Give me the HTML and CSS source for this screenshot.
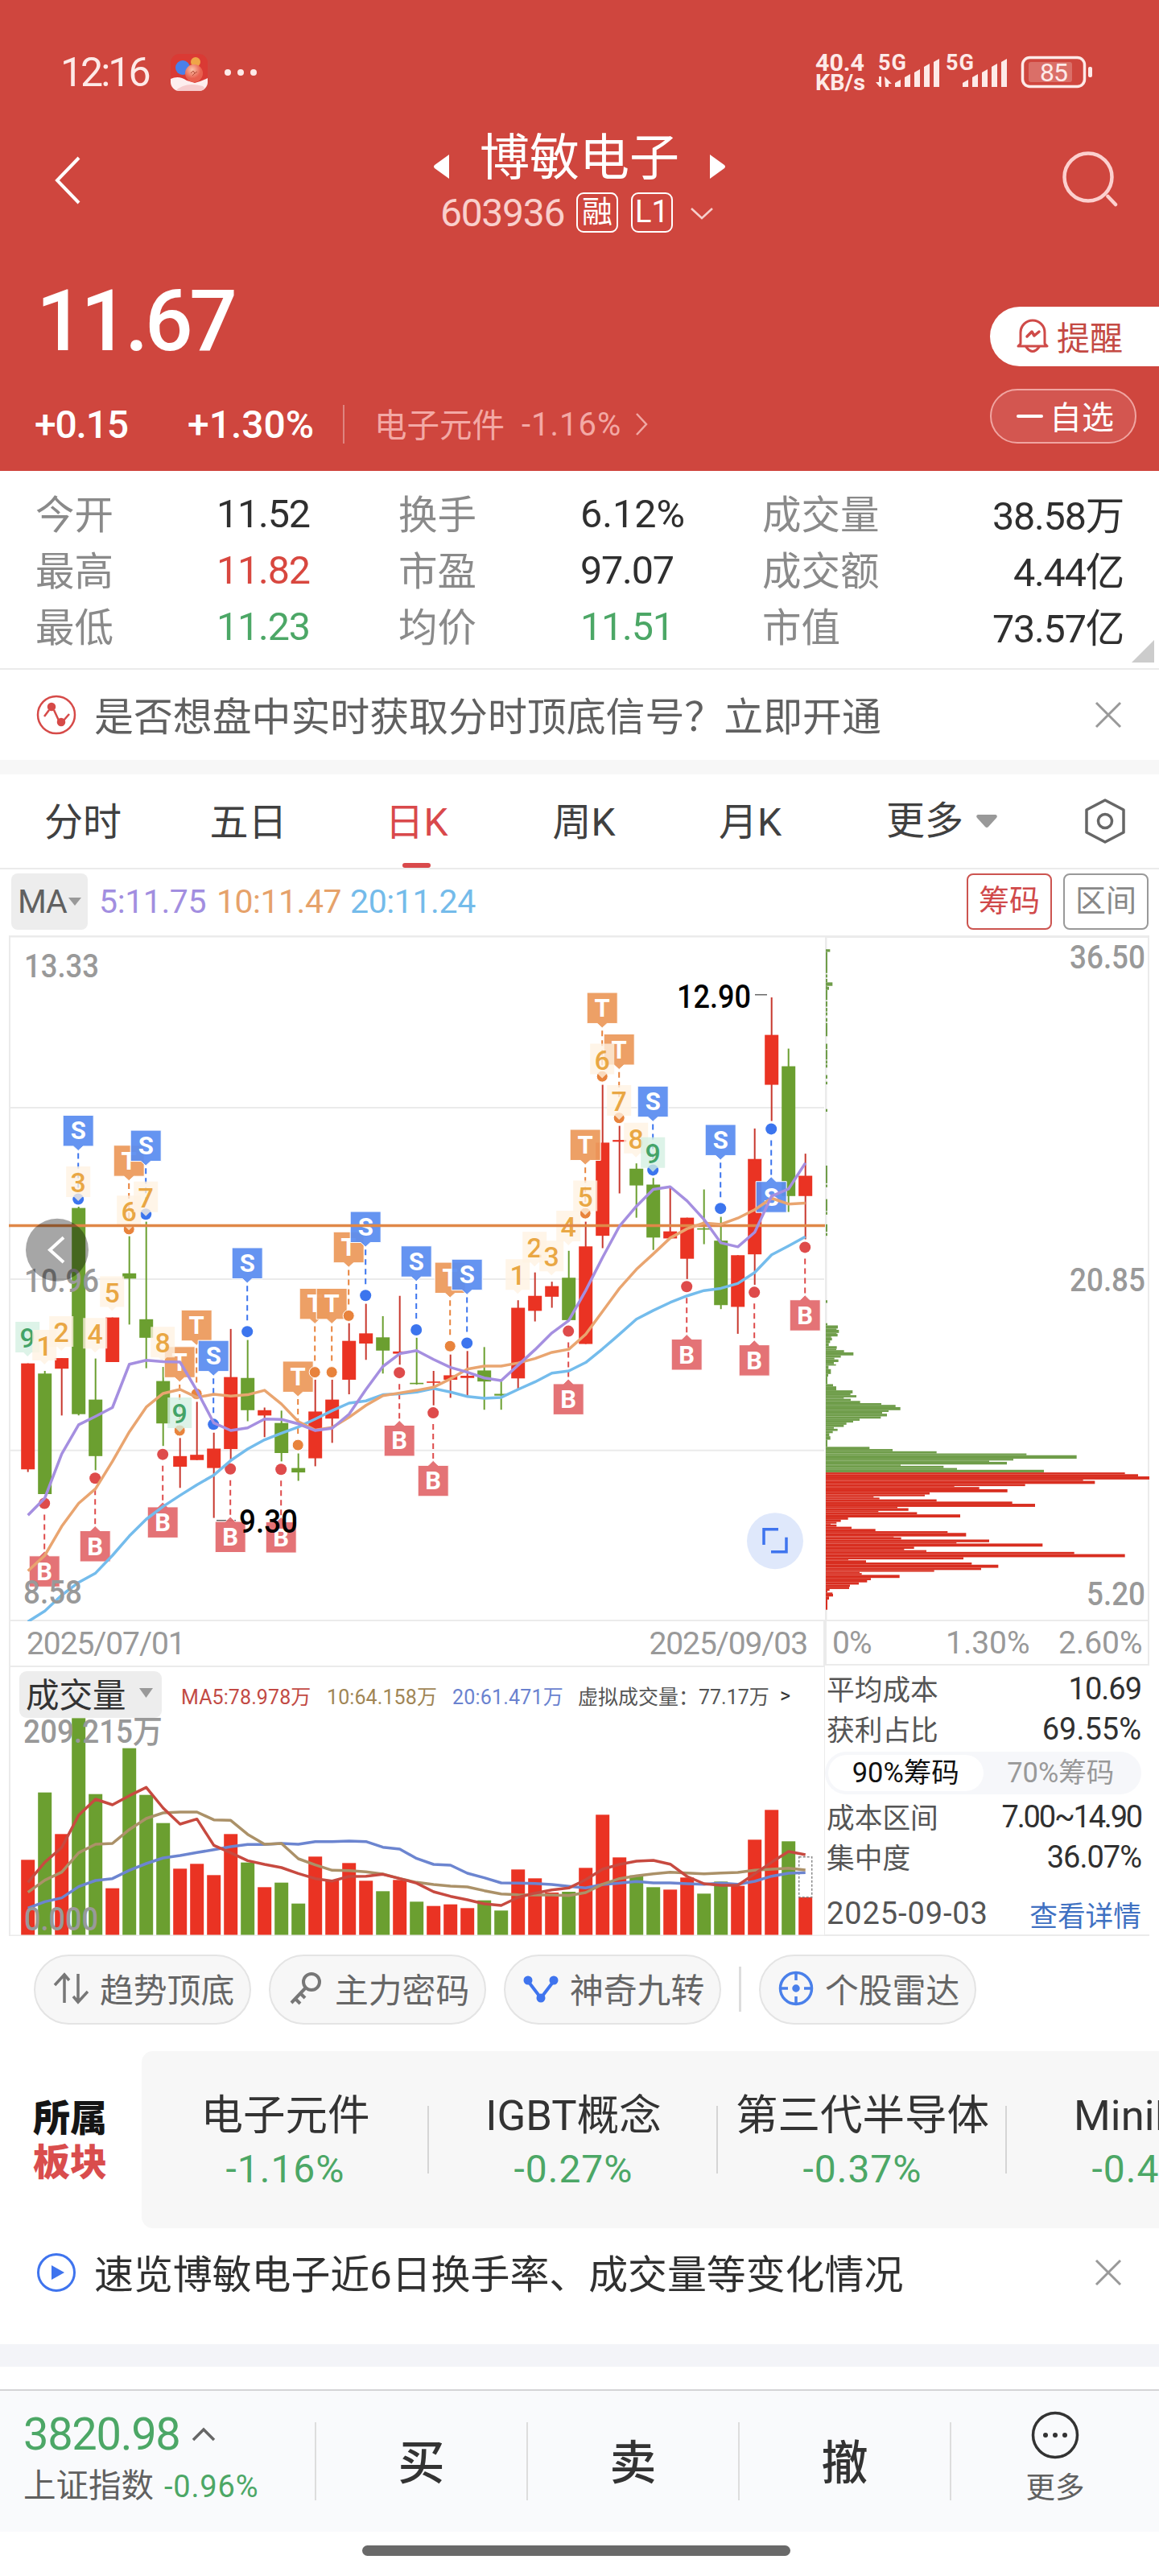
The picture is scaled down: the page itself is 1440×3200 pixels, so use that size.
FILE: index.html
```html
<!DOCTYPE html>
<html lang="zh-CN">
<head>
    <meta charset="UTF-8">
    <meta name="viewport" content="width=device-width, initial-scale=1.0">
    <title>博敏电子 603936</title>
    <link rel="stylesheet" href="styles.css">
</head>
<body>
    <!-- Header -->
    <header class="header">
        <div class="status-bar">
            <span class="clock">12:16</span>
            <svg class="app-icon" width="46" height="46" viewBox="0 0 46 46">
                <defs>
                    <radialGradient id="ball" cx=".4" cy=".3"><stop offset="0" stop-color="#fbc3a8"/><stop offset="1" stop-color="#e8604f"/></radialGradient>
                    <clipPath id="appClip"><rect width="46" height="46" rx="11"/></clipPath>
                </defs>
                <g clip-path="url(#appClip)">
                    <rect width="46" height="46" fill="#da3a34"/>
                    <path d="M0 31 Q10 26 20 33 L30 36 Q38 34 46 30 V46 H0Z" fill="#fdeeee"/>
                    <path d="M6 46 Q18 34 40 40 L46 46Z" fill="#f6cccd"/>
                    <circle cx="31" cy="10" r="6" fill="#efa548"/>
                    <circle cx="15" cy="17" r="9" fill="#4a80ea"/>
                    <circle cx="29" cy="24" r="11" fill="url(#ball)"/>
                    <path d="M25 24l3-3 2 3 3-2M27 27l4-4" stroke="#b5513c" fill="none"/>
                </g>
            </svg>
            <span class="dots"><i></i><i></i><i></i></span>
            <svg class="signal" width="350" height="60" viewBox="0 0 350 60">
                <g fill="#fdeae8">
                    <text x="2" y="28" class="st-bold" font-size="30" textLength="61" lengthAdjust="spacingAndGlyphs">40.4</text>
                    <text x="2" y="52" class="st-bold" font-size="28" textLength="62" lengthAdjust="spacingAndGlyphs">KB/s</text>
                    <text x="80" y="27" class="st-bold" font-size="27" textLength="35">5G</text>
                    <text x="164" y="27" class="st-bold" font-size="27" textLength="35">5G</text>
                    <path d="M77 42h4V35h3V48h-2zM88 35l9 9h-4v4h-4z"/>
                    <path d="M101 48v-5l7-4v9zM113 48V36l7-4v16zM125 48V30l7-4v22zM137 48V23l7-4v29zM149 48V17l7-4v35z"/>
                    <path d="M185 48v-5l7-4v9zM197 48V36l7-4v16zM209 48V30l7-4v22zM221 48V23l7-4v29zM233 48V17l7-4v35z"/>
                    <rect x="341" y="23" width="5" height="13" rx="2"/>
                    <rect x="267" y="17" width="54" height="25" rx="3" opacity=".25"/>
                    <text x="281" y="41" font-size="32" textLength="35">85</text>
                </g>
                <rect x="259.500" y="11.500" width="77" height="36" rx="9" fill="none" stroke="#fdeae8" stroke-width="3.500"/>
            </svg>
        </div>

        <div class="nav">
            <svg class="nav-back" width="34" height="60" viewBox="0 0 34 60"><path d="M31 2L4 30L31 58" fill="none" stroke="#fff" stroke-width="4"/></svg>
            <div class="nav-center">
                <div class="name-row">
                    <svg width="20" height="30" viewBox="0 0 20 30"><path d="M20 0V30L2 17Q0 15 2 13Z" fill="#fff"/></svg>
                    <h1>博敏电子</h1>
                    <svg width="20" height="30" viewBox="0 0 20 30"><path d="M0 0V30L18 17Q20 15 18 13Z" fill="#fff"/></svg>
                </div>
                <div class="code-row">
                    <span class="code">603936</span>
                    <span class="badge">融</span>
                    <span class="badge">L1</span>
                    <svg width="30" height="16" viewBox="0 0 30 16"><path d="M2 2L15 14L28 2" fill="none" stroke="#f6cfcc" stroke-width="2.500"/></svg>
                </div>
            </div>
            <svg class="nav-search" width="72" height="72" viewBox="0 0 72 72" fill="none" stroke="#fcd0ce" stroke-width="4.500" stroke-linecap="round"><circle cx="34" cy="34" r="29.500"/><path d="M58.500 58L68 68"/></svg>
        </div>

        <div class="price">11.67</div>
        <div class="change-row">
            <span class="chg">+0.15</span>
            <span class="chg pct">+1.30%</span>
            <span class="vline"></span>
            <span class="sector-name">电子元件</span>
            <span class="sector-pct">-1.16%</span>
            <svg width="17" height="30" viewBox="0 0 17 30"><path d="M2 2L14 15L2 28" fill="none" stroke="#f0a8a4" stroke-width="2.500"/></svg>
        </div>

        <div class="head-actions">
            <div class="remind">
                <svg width="40" height="42" viewBox="0 0 40 42" fill="none" stroke="#cf4a48" stroke-width="3" stroke-linejoin="round" stroke-linecap="round"><path d="M5 31V17A15 15 0 0 1 35 17V31L38 34H2Z"/><path d="M12 35Q20 46 28 35"/><path d="M13 22l6-6 3 5 6-5" stroke-width="3.500"/></svg>
                提醒
            </div>
            <div class="fav"><i></i>自选</div>
        </div>
    </header>

    <!-- Quote numbers -->
    <section class="quote">
        <span class="lb">今开</span><b>11.52</b><span class="lb">换手</span><b class="wide">6.12%</b><span class="lb">成交量</span><b class="right">38.58万</b>
        <span class="lb">最高</span><b class="up">11.82</b><span class="lb">市盈</span><b>97.07</b><span class="lb">成交额</span><b class="right">4.44亿</b>
        <span class="lb">最低</span><b class="down">11.23</b><span class="lb">均价</span><b class="down">11.51</b><span class="lb">市值</span><b class="right">73.57亿</b>
        <svg class="corner" width="28" height="28" viewBox="0 0 28 28"><path d="M28 0V28H0Z" fill="#ccc"/></svg>
    </section>

    <section class="notice">
        <svg width="50" height="50" viewBox="0 0 50 50" fill="none" stroke="#d64a48" stroke-width="2.500"><circle cx="25" cy="25" r="23"/><path d="M10 27L16 19M22 19L28 32M34 32L41 24"/><circle cx="19" cy="15" r="4" fill="#d64a48"/><circle cx="31" cy="34" r="4" fill="#d64a48"/></svg>
        <span>是否想盘中实时获取分时顶底信号？立即开通</span>
        <svg class="close" width="34" height="34" viewBox="0 0 34 34"><path d="M2 2L32 32M32 2L2 32" stroke="#999" stroke-width="3"/></svg>
    </section>

    <!-- Period tabs -->
    <nav class="tabs">
        <span>分时</span>
        <span>五日</span>
        <span class="active">日K</span>
        <span>周K</span>
        <span>月K</span>
        <span class="more">更多 <svg width="26" height="17" viewBox="0 0 26 17"><path d="M2 0H24Q27 1 25 4L15 15Q13 17 11 15L1 4Q-1 1 2 0Z" fill="#999"/></svg></span>
        <svg width="54" height="56" viewBox="0 0 54 56" fill="none" stroke="#666" stroke-width="3.500" stroke-linejoin="round"><path d="M27 2L50 14V42L27 54L4 42V14Z"/><circle cx="27" cy="28" r="8.500"/></svg>
    </nav>

    <div class="ma-row">
        <span class="ma-btn">MA<svg width="16" height="10" viewBox="0 0 16 10"><path d="M0 0H16L8 10Z" fill="#999"/></svg></span>
        <span class="ma5">5:11.75</span>
        <span class="ma10">10:11.47</span>
        <span class="ma20">20:11.24</span>
        <span class="box on">筹码</span>
        <span class="box">区间</span>
    </div>

    <!-- Charts -->
    <section class="charts">
        <div class="left">
            <svg id="kline" width="1025" height="852" viewBox="0 0 1025 852"></svg>
            <div class="dates"><span>2025/07/01</span><span>2025/09/03</span></div>
            <div class="volume">
                <svg id="vol" width="1025" height="336" viewBox="0 0 1025 336"></svg>
                <div class="vol-head">
                    <span class="vol-btn">成交量<svg width="17" height="12" viewBox="0 0 17 12"><path d="M0 0H17L8.500 12Z" fill="#999"/></svg></span>
                    <span class="v5">MA5:78.978万</span>
                    <span class="v10">10:64.158万</span>
                    <span class="v20">20:61.471万</span>
                    <span class="vv">虚拟成交量：77.17万</span>
                    <span class="va">&gt;</span>
                </div>
            </div>
        </div>
        <div class="chips">
            <svg id="chips" width="403" height="852" viewBox="1025 0 403 852"></svg>
            <div class="axis"><span>0%</span><span>1.30%</span><span>2.60%</span></div>
            <div class="cost">
                <p><span>平均成本</span><b>10.69</b></p>
                <p><span>获利占比</span><b class="wide">69.55%</b></p>
                <div class="toggle"><span class="sel">90%筹码</span><span>70%筹码</span></div>
                <p><span>成本区间</span><b class="tight">7.00~14.90</b></p>
                <p><span>集中度</span><b>36.07%</b></p>
                <p class="foot"><span>2025-09-03</span><a>查看详情</a></p>
            </div>
        </div>
    </section>

    <!-- Tool chips -->
    <div class="tools">
        <span class="tool"><svg width="44" height="44" viewBox="0 0 44 44" fill="none" stroke="#777" stroke-width="3.500"><path d="M14 40V5M2 18L14 5L20 12M31 4V39M43 26L31 39L25 32"/></svg>趋势顶底</span>
        <span class="tool"><svg width="44" height="44" viewBox="0 0 44 44" fill="none" stroke="#777" stroke-width="4"><circle cx="29" cy="14" r="10"/><path d="M22 21L4 40M9 35L15 41M15 28L21 34"/></svg>主力密码</span>
        <span class="tool"><svg width="44" height="44" viewBox="0 0 44 44" fill="#3f74ee" stroke="#3f74ee" stroke-width="4"><path d="M6 13L22 34L38 13" fill="none"/><circle cx="6" cy="12" r="3.500"/><circle cx="22" cy="34" r="3.500"/><circle cx="38" cy="12" r="3.500"/></svg>神奇九转</span>
        <i class="tool-line"></i>
        <span class="tool"><svg width="44" height="44" viewBox="0 0 44 44" fill="none" stroke="#4a80ea" stroke-width="3.500"><circle cx="22" cy="22" r="19.500"/><path d="M22 2V12M22 32V42M2 22H12M32 22H42"/><circle cx="22" cy="22" r="3" fill="#4a80ea"/></svg>个股雷达</span>
    </div>

    <section class="sectors">
        <div class="sec-title">所属<br><em>板块</em></div>
        <div class="sec-list">
            <div class="sec"><span>电子元件</span><b>-1.16%</b></div>
            <div class="sec"><span>IGBT概念</span><b>-0.27%</b></div>
            <div class="sec"><span>第三代半导体</span><b>-0.37%</b></div>
            <div class="sec"><span>MiniLED</span><b>-0.43%</b></div>
        </div>
    </section>

    <section class="notice video">
        <svg width="50" height="50" viewBox="0 0 50 50"><circle cx="25" cy="25" r="22.500" fill="none" stroke="#3f74ee" stroke-width="3"/><path d="M19 16L35 25L19 34Z" fill="#3f74ee"/></svg>
        <span>速览博敏电子近6日换手率、成交量等变化情况</span>
        <svg class="close" width="34" height="34" viewBox="0 0 34 34"><path d="M2 2L32 32M32 2L2 32" stroke="#999" stroke-width="3"/></svg>
    </section>

    <!-- Bottom bar -->
    <footer class="bottom">
        <div class="index">
            <div class="idx-num">3820.98<svg width="30" height="18" viewBox="0 0 30 18"><path d="M2 16L15 3L28 16" fill="none" stroke="#666" stroke-width="3.500"/></svg></div>
            <div class="idx-name">上证指数 <b>-0.96%</b></div>
        </div>
        <div class="act">买</div>
        <div class="act">卖</div>
        <div class="act">撤</div>
        <div class="act last">
            <svg width="60" height="60" viewBox="0 0 60 60" fill="#333"><circle cx="30" cy="30" r="27.500" fill="none" stroke="#333" stroke-width="3.500"/><circle cx="18" cy="30" r="3"/><circle cx="30" cy="30" r="3"/><circle cx="42" cy="30" r="3"/></svg>
            更多
        </div>
    </footer>
    <div class="home-bar"></div>

    <script>
        const RED = "#ea3323", GREEN = "#6b9f30";
        const X = i => 34.7 + 21 * i;
        const Y = v => v / 1.8233 - 2;      // price panel units to px
        const V = v => v / 3 - 69;          // volume panel units to px

        const line = (x1, y1, x2, y2, c, w = 2, extra = "") =>
            `<line x1="${x1}" y1="${y1}" x2="${x2}" y2="${y2}" stroke="${c}" stroke-width="${w}" ${extra}/>`;
        const rect = (x, y, w, h, c, extra = "") =>
            `<rect x="${x}" y="${y}" width="${w}" height="${h}" fill="${c}" ${extra}/>`;
        const label = (s, x, y, len, size, c, extra = "") =>
            `<text x="${x}" y="${y}" textLength="${len}" lengthAdjust="spacingAndGlyphs" font-size="${size}" fill="${c}" ${extra}>${s}</text>`;
        const curve = (arr, fy, c, w) =>
            `<polyline points="${arr.map((v, i) => X(i) + "," + fy(v)).join(" ")}" fill="none" stroke="${c}" stroke-width="${w}" stroke-linejoin="round"/>`;

        // [up?, body top, body bottom, high, low]
        const candles = [
            [1,973,1213,973,1219],[0,996,1269,990,1269],[1,961,985,961,1091],[0,621,1088,618,1091],[0,1055,1183,962,1215],
            [1,869,970,869,970],[0,769,781,685,885],[0,873,915,652,984],[0,1013,1109,981,1160],[1,1183,1207,1142,1255],
            [1,1180,1192,1060,1192],[1,1166,1210,1130,1323],[1,1004,1167,895,1195],[0,1006,1079,920,1104],[1,1079,1091,1073,1140],
            [0,1108,1176,1080,1195],[0,1210,1220,1177,1239],[1,1082,1188,1010,1206],[1,1055,1098,1010,1153],[1,922,1010,882,1043],
            [1,905,928,838,965],[0,914,944,866,996],[1,946,951,820,976],[0,1017,1020,915,1021],[1,1014,1017,990,1068],
            [1,1000,1010,953,1051],[1,1001,1006,945,1047],[0,989,1014,936,1078],[0,1042,1046,1013,1078],[1,847,1007,830,1030],
            [1,820,854,767,878],[1,798,822,788,847],[0,779,875,718,875],[1,708,929,652,929],[1,473,684,342,712],
            [1,467,471,435,588],[0,532,570,520,643],[0,568,688,553,716],[1,674,690,575,690],[1,643,736,643,782],
            [0,667,670,579,703],[0,695,841,641,850],[1,728,845,728,906],[1,510,726,441,795],[1,229,342,144,424],
            [0,300,594,260,630],[1,548,594,498,692]
        ];
        const ma5 = [1317,1278,1178,1112,1093,1073,975,966,969,970,1035,1108,1125,1119,1099,1100,1110,1125,1120,1088,1032,980,951,944,964,982,993,1006,1012,977,942,904,876,808,733,662,617,579,573,605,647,700,709,676,594,578,519];
        const ma10 = [1443,1408,1342,1290,1257,1195,1128,1072,1041,1032,1050,1043,1047,1044,1034,1065,1105,1124,1118,1095,1068,1046,1040,1034,1027,1008,986,979,979,972,962,948,941,907,855,803,760,725,689,668,655,658,644,625,599,612,610];
        const ma20 = [1558,1534,1498,1469,1448,1408,1364,1326,1297,1272,1248,1226,1193,1167,1146,1131,1117,1099,1080,1063,1058,1044,1042,1038,1030,1038,1048,1052,1050,1032,1015,995,990,971,940,907,873,853,835,820,808,803,792,767,727,707,686];

        // signal tags: [letter, candle, dot position, tag below?]
        const tags = [
            ["S",3,601],["T",6,669],["S",7,635],["T",10,1042],["T",9,1125],["S",11,1111],["S",13,901],["T",16,1158],
            ["T",17,993],["T",18,993],["T",19,865],["S",20,819],["S",23,897],["T",25,934],["S",26,927],["T",33,633],
            ["T",34,323],["T",35,417],["S",37,535],["S",41,622],["S",44,442,1],
            ["B",1,1290,1],["B",4,1233,1],["B",8,1179,1],["B",12,1212,1],["B",15,1213,1],["B",22,994,1],["B",24,1085,1],
            ["B",32,900,1],["B",39,799,1],["B",43,812,1],["B",46,710,1]
        ];
        const tagColors = { S: ["#5b8df0", "#3c75ee"], T: ["#ec9a5c", "#e8833c"], B: ["#e26a6d", "#de4b4b"] };

        // nine-turn counters
        const counts = [
            [0,9,879],[1,1,897],[2,2,866],[3,3,527],[4,4,870],[5,5,776],[6,6,593],[7,7,561],[8,8,890],[9,9,1050],
            [29,1,737],[30,2,675],[31,3,695],[32,4,627],[33,5,559],[34,6,249],[35,7,343],[36,8,428],[37,9,461]
        ];

        function drawKline() {
            let s = "";
            [394, 782, 1170].forEach(v => s += line(12, Y(v), 1024, Y(v), "#ebebeb"));
            s += line(12, 1, 1025, 1, "#ebebeb", 3) + line(12, 851, 1025, 851, "#ebebeb") + line(12, 0, 12, 852, "#ebebeb");
            candles.forEach(([up, t, b, h, l], i) => {
                const c = up ? RED : GREEN;
                s += line(X(i), Y(h), X(i), Y(l), up ? "#c8382e" : GREEN);
                s += rect(X(i) - 8.5, Y(t), 17, Math.max(1.5, (b - t) / 1.8233), c);
            });
            s += label("12.90", 841, Y(168), 92, 40, "#000", 'class="mid"') + line(938, Y(138), 953, Y(138), "#666", 1.5);
            s += line(269, Y(1329), 293, Y(1329), "#444", 1.5);
            tags.forEach(([t, i, d, below]) => {
                const [bg, dot] = tagColors[t], x = X(i) - .5, y = Y(d), dir = below ? 1 : -1;
                s += line(x, y + 14 * dir, x, y + 59 * dir, dot, 2, 'stroke-dasharray="7 5"');
                s += `<circle cx="${x}" cy="${y}" r="7" fill="${dot}" stroke="#fff" stroke-width="${t === "T" ? 1 : 0}"/>`;
                const top = below ? y + 65.3 : y - 104.2;
                const tip = below ? `M${x - 19} ${top}H${x - 6}L${x} ${top - 6}L${x + 6} ${top}H${x + 19}V${top + 38.5}H${x - 19}Z`
                                  : `M${x - 19} ${top}H${x + 19}V${top + 38.5}H${x + 6}L${x} ${top + 44}L${x - 6} ${top + 38.5}H${x - 19}Z`;
                s += `<path d="${tip}" fill="${bg}" fill-opacity=".94" stroke="#fff" stroke-width="1"/>`;
                s += `<text x="${x}" y="${top + 30}" class="tag">${t}</text>`;
            });
            counts.forEach(([i, n, v]) => {
                const x = X(i) - .5, y = Y(v), g = n === 9;
                s += `<path d="M${x - 15} ${y}H${x + 15}V${y + 38}H${x + 5}L${x} ${y + 43}L${x - 5} ${y + 38}H${x - 15}Z" fill="${g ? "#d3efe1" : "#fff2e2"}" fill-opacity=".78"/>`;
                s += `<text x="${x}" y="${y + 32}" class="count" fill="${g ? "#44a468" : "#e9a744"}">${n}</text>`;
            });
            s += line(11, Y(661), 1025, Y(661), "#e08848", 3.5);
            s += curve(ma20, Y, "#74bcec", 3.5) + curve(ma10, Y, "#e9a570", 3.5) + curve(ma5, Y, "#a58fe0", 3.5);
            s += label("9.30", 297, Y(1357), 73, 40, "#000", 'class="mid"');
            s += label("13.33", 30, Y(98), 93, 40, "#999", 'class="mid"') + label("10.96", 30, Y(812), 93, 40, "#999", 'class="mid"') + label("8.58", 29, Y(1517), 73, 40, "#999", 'class="mid"');
            s += `<circle cx="71" cy="${Y(716)}" r="39" fill="#000" fill-opacity=".35"/><path d="M79 ${Y(688)}L62 ${Y(716)}L79 ${Y(744)}" fill="none" stroke="#fff" stroke-width="4"/>`;
            s += `<circle cx="963" cy="${Y(1375)}" r="35" fill="#dfe8fb"/><path d="M967 ${Y(1349)}H949V${Y(1384)}M958 ${Y(1400)}H977V${Y(1367)}" fill="none" stroke="#3f74ee" stroke-width="3.5"/>`;
            document.getElementById("kline").innerHTML = s;
        }

        // cost distribution: [row top, right edge], each row runs down to the next one
        const dist = [
            [35,94],[41,84],[89,0],[92,84],[99,0],[102,84],[110,103],[118,84],[120,90],[127,84],[150,0],[153,84],[165,0],[168,84],[176,0],
            [178,84],[185,0],[191,84],[199,0],[202,84],[232,0],[249,84],[261,0],[263,84],[285,0],[287,84],[294,0],[296,84],[303,0],
            [320,84],[328,0],[335,84],[341,0],[397,84],[403,0],[525,84],[565,0],[568,84],[574,0],[601,84],[628,0],[630,84],[636,0],
            [658,84],[675,0],[678,84],[684,0],[830,84],[836,0],[882,84],[887,123],[894,118],[897,127],[904,118],[906,122],[912,98],[915,101],
            [921,94],[927,89],[934,119],[940,117],[943,146],[948,181],[955,134],[960,110],[964,125],[970,108],[975,116],[978,88],[986,97],
            [997,87],[1003,84],[1020,105],[1025,117],[1034,178],[1041,170],[1045,192],[1050,145],[1053,171],[1058,206],[1063,285],
            [1067,338],[1072,356],[1079,312],[1083,288],[1087,306],[1093,283],[1098,204],[1103,180],[1107,155],[1112,145],[1117,108],
            [1121,122],[1126,104],[1131,91],[1138,95],[1146,84],[1162,241],[1167,327],[1172,491],[1177,826],[1181,1013],[1189,777],
            [1193,687],[1196,753],[1202,357],[1205,517],[1210,567],[1214,891],[1220,1193],[1224,1242],[1229,1284],[1236,1037],
            [1239,1081],[1246,821],[1251,557],[1253,650],[1258,755],[1265,465],[1270,447],[1274,256],[1277,278],[1281,491],[1286,773],
            [1291,858],[1298,345],[1301,386],[1307,274],[1310,418],[1315,579],[1322,161],[1327,134],[1332,118],[1336,96],[1338,118],
            [1343,174],[1348,263],[1353,532],[1357,601],[1365,331],[1367,359],[1372,687],[1378,565],[1381,886],[1388,407],[1393,370],
            [1396,453],[1400,1004],[1405,1193],[1412,591],[1417,162],[1419,228],[1424,622],[1429,721],[1436,657],[1441,482],[1445,204],
            [1448,212],[1452,353],[1459,246],[1464,232],[1469,201],[1474,168],[1479,165],[1484,92],[1488,84],[1492,103],[1495,105],
            [1501,90],[1508,84],[1531,0]
        ];

        function drawChips() {
            let s = line(1025, 1.5, 1428, 1.5, "#ebebeb", 3) + line(1025, 851, 1428, 851, "#ebebeb") + line(1026, 0, 1026, 852, "#ebebeb", 3) + line(1427, 0, 1427, 852, "#ebebeb");
            dist.forEach(([v, x], k) => {
                if (!x) return;
                s += rect(1026, Y(v), (x - 78) / 3, (dist[k + 1][0] - v) / 1.8233, v < 1220 ? "#6f9d4a" : "#d82e20");
            });
            s += label("36.50", 1329, Y(79), 94, 40, "#999", 'class="mid"') + label("20.85", 1329, Y(809), 94, 40, "#999", 'class="mid"') + label("5.20", 1350, Y(1520), 73, 40, "#999", 'class="mid"');
            document.getElementById("chips").innerHTML = s;
        }

        // up days are 1, down days 0
        const volumes = [
            [1,931],[0,680],[1,835],[0,403],[0,686],[1,1037],[0,515],[0,689],[0,794],[1,964],[1,946],[1,988],[1,835],[0,941],[1,1033],
            [0,1016],[0,1094],[1,919],[1,1005],[1,943],[1,1009],[0,1048],[1,1006],[0,1087],[1,1103],[1,1097],[1,1111],[0,1082],[0,1120],
            [1,967],[1,1000],[1,1053],[0,1050],[1,961],[1,763],[1,922],[0,989],[0,1033],[1,1042],[1,997],[0,1057],[0,1012],[1,1028],
            [1,856],[1,745],[0,862],[1,1070]
        ];
        const vma5 = [1015,940,885,765,705,726,692,661,738,798,779,877,905,934,948,960,982,1001,1010,993,992,985,1001,1018,1050,1067,1080,1095,1101,1071,1055,1043,1036,1005,966,948,936,933,947,993,1020,1026,1026,983,940,900,912];
        const vma10 = [1052,1007,977,905,873,870,818,777,756,753,753,782,784,836,873,870,927,950,970,971,976,984,1001,1015,1023,1029,1032,1046,1058,1061,1062,1062,1064,1053,1022,1001,991,983,977,980,983,980,978,970,966,962,969];
        const vma20 = [1111,1087,1073,1031,1008,1001,970,945,924,915,904,893,882,874,874,870,873,863,863,861,863,884,891,926,948,951,981,998,1017,1018,1019,1023,1030,1036,1023,1018,1012,1017,1017,1020,1022,1018,1022,1011,992,981,979];

        function drawVolume() {
            let s = line(12, 1, 1025, 1, "#ebebeb") + line(12, 0, 12, 336, "#ebebeb") + line(1025, 0, 1025, 336, "#ebebeb");
            volumes.forEach(([up, v], i) => s += rect(X(i) - 8.5, V(v), 17, 336 - V(v), up ? RED : GREEN));
            s += `<rect x="${X(46) - 8}" y="${V(920)}" width="16" height="50" fill="#fff" stroke="#888" stroke-width="1.5" stroke-dasharray="3 2"/>`;
            s += curve(vma20, V, "#6c85d0", 3.5) + curve(vma10, V, "#ab9168", 3.5) + curve(vma5, V, "#c74a40", 3.5);
            s += label("209.215万", 29, 96, 173, 40, "#999", 'class="mid"') + label("0.000", 30, 329, 92, 40, "#999", 'class="mid"');
            s += line(12, 335.5, 1025, 335.5, "#ebebeb");
            document.getElementById("vol").innerHTML = s;
        }

        drawKline();
        drawChips();
        drawVolume();
    </script>
</body>
</html>
```
FILE: styles.css
```css
* {
    box-sizing: border-box;
}
body {
    margin: 0;
    width: 1440px;
    height: 3200px;
    overflow: hidden;
    background: #fff;
    color: #333;
    font-family: Roboto, "Noto Sans CJK SC", sans-serif;
}
svg {
    display: block;
    flex-shrink: 0;
}
b {
    font-weight: 400;
}

/* Header */
.header {
    position: relative;
    height: 585px;
    background: #cf463e;
    color: #fff;
}
.status-bar {
    display: flex;
    align-items: center;
    height: 180px;
    padding-left: 75px;
}
.clock {
    width: 137px;
    font-size: 50px;
    letter-spacing: -3px;
    color: #fdeae8;
}
.dots {
    display: flex;
    gap: 8px;
    margin-left: 21px;
}
.dots i {
    width: 8px;
    height: 8px;
    border-radius: 50%;
    background: #fdeae8;
}
.signal {
    margin-left: 692px;
}
.st-bold {
    font-weight: 700;
}
.nav {
    display: flex;
    height: 130px;
    margin-top: -22px;
}
.nav-back {
    margin: 36px 0 0 67px;
}
.nav-center {
    width: 520px;
    margin-left: 359px;
    padding-top: 3px;
}
.name-row {
    display: flex;
    align-items: center;
    justify-content: center;
    gap: 38px;
    height: 72px;
}
.name-row svg {
    margin-top: 19px;
}
h1 {
    margin: 0;
    font-size: 62px;
    line-height: 72px;
    font-weight: 400;
}
.code-row {
    display: flex;
    align-items: center;
    gap: 16px;
    height: 62px;
    padding-left: 87px;
}
.code {
    width: 153px;
    font-size: 48px;
    letter-spacing: -1.3px;
    color: #f9cfcc;
}
.badge {
    width: 52px;
    height: 50px;
    border: 2px solid #fff;
    border-radius: 9px;
    font-size: 38px;
    line-height: 45px;
    text-align: center;
}
.code-row svg {
    margin: 2px 0 0 5px;
}
.nav-search {
    margin: 28px 0 0 338px;
}
.price {
    margin: 53px 0 0 45px;
    height: 118px;
    font-size: 105px;
    line-height: 118px;
    font-weight: 500;
    letter-spacing: -4.5px;
}
.change-row {
    display: flex;
    align-items: center;
    height: 60px;
    margin-top: 38px;
    padding-left: 43px;
}
.chg {
    width: 190px;
    font-size: 48px;
    font-weight: 500;
    letter-spacing: -1.2px;
}
.chg.pct {
    width: 193px;
    letter-spacing: 0;
}
.vline {
    width: 2px;
    height: 48px;
    background: #de8580;
}
.sector-name {
    margin: -3px 0 0 37px;
    width: 183px;
    font-size: 40.5px;
    color: #f3a9a5;
}
.sector-pct {
    width: 141px;
    font-size: 40px;
    letter-spacing: 1px;
    color: #f3a9a5;
}
.head-actions {
    position: absolute;
    right: 0;
    top: 381px;
    width: 210px;
}
.remind {
    display: flex;
    align-items: center;
    gap: 10px;
    height: 74px;
    padding: 0 0 3px 33px;
    border-radius: 37px 0 0 37px;
    background: #fff;
    color: #c44a44;
    font-size: 41px;
}
.fav {
    display: flex;
    align-items: center;
    gap: 8px;
    width: 182px;
    height: 68px;
    margin-top: 28px;
    padding: 0 0 3px 31px;
    border: 2px solid #f0a5a1;
    border-radius: 34px;
    background: #d35650;
    font-size: 40px;
}
.fav i {
    width: 33px;
    height: 4px;
    margin-top: 3px;
    border-radius: 2px;
    background: #fff;
}

/* Quote */
.quote {
    position: relative;
    display: grid;
    grid-template-columns: 225px 226px 226px 226px 226px 223px;
    grid-auto-rows: 70px;
    align-items: center;
    height: 247px;
    padding: 18px 44px 0;
    border-bottom: 2px solid #ebebeb;
    font-size: 48.5px;
}
.quote .lb {
    margin-top: -4px;
    color: #8a8a8a;
}
.quote b {
    letter-spacing: -1.2px;
    color: #2f2f2f;
}
.quote b.wide {
    letter-spacing: 0;
}
.quote b.up {
    color: #d8473f;
}
.quote b.down {
    color: #4ca766;
}
.quote .right {
    margin-top: -3px;
    text-align: right;
}
.corner {
    position: absolute;
    right: 6px;
    bottom: 7px;
}

.notice {
    display: flex;
    align-items: center;
    gap: 22px;
    height: 112px;
    padding: 0 46px 0 45px;
    font-size: 48.9px;
    color: #606060;
}
.notice span {
    margin-top: -4px;
}
.notice .close {
    margin-left: auto;
}

/* Tabs */
.tabs {
    display: grid;
    grid-template-columns: 206px 205px 213px 203px 210px 266px 140px;
    align-items: center;
    justify-items: center;
    height: 136px;
    border-top: 18px solid #f7f7f7;
    border-bottom: 2px solid #ebebeb;
    font-size: 48px;
    color: #404040;
}
.tabs span {
    position: relative;
    height: 116px;
    line-height: 120px;
}
.tabs .active {
    color: #d9494b;
}
.tabs .active::after {
    content: "";
    position: absolute;
    left: 50%;
    bottom: 0;
    width: 35px;
    height: 6px;
    margin-left: -18px;
    border-radius: 3px;
    background: #d9494b;
}
.tabs .more {
    display: flex;
    align-items: center;
    gap: 16px;
}
.ma-row {
    display: flex;
    align-items: center;
    height: 82px;
    padding: 0 13px 2px 14px;
    font-size: 41px;
    letter-spacing: -1.2px;
}
.ma-btn {
    display: flex;
    align-items: center;
    gap: 2px;
    width: 95px;
    height: 70px;
    margin-right: 14px;
    padding-left: 8px;
    border-radius: 8px;
    background: #ededed;
    color: #606060;
}
.ma5 {
    width: 146px;
    letter-spacing: -.4px;
    color: #a28ee0;
}
.ma10 {
    width: 166px;
    letter-spacing: -.5px;
    color: #e6a26a;
}
.ma20 {
    letter-spacing: -.4px;
    color: #74bbea;
}
.box {
    width: 106px;
    height: 70px;
    margin-left: 14px;
    border: 2px solid #999;
    border-radius: 8px;
    font-size: 38px;
    line-height: 64px;
    letter-spacing: 0;
    text-align: center;
    color: #888;
}
.box.on {
    margin-left: auto;
    border-color: #cc5450;
    color: #d0494a;
}

/* Charts */
.charts {
    display: flex;
    height: 1243px;
}
.left {
    width: 1025px;
}
.mid {
    font-weight: 500;
}
.tag {
    font-size: 31px;
    font-weight: 700;
    text-anchor: middle;
    fill: #fff;
}
.count {
    font-size: 34px;
    font-weight: 500;
    text-anchor: middle;
}
.dates {
    display: flex;
    justify-content: space-between;
    align-items: center;
    height: 55px;
    margin-left: 11px;
    padding: 0 20px;
    border-left: 2px solid #ebebeb;
    border-right: 2px solid #ebebeb;
    font-size: 39px;
    letter-spacing: -1.1px;
    color: #999;
}
.volume {
    position: relative;
}
.vol-head {
    position: absolute;
    left: 24px;
    top: 7px;
    display: flex;
    align-items: center;
    font-size: 25px;
    white-space: nowrap;
}
.vol-head > span {
    padding-top: 2px;
}
.vol-head .vol-btn {
    display: flex;
    align-items: center;
    gap: 16px;
    width: 177px;
    height: 58px;
    margin-right: 24px;
    padding: 0 0 4px 8px;
    border-radius: 9px;
    background: #ededed;
    font-size: 41.5px;
}
.v5 {
    width: 181px;
    letter-spacing: .1px;
    color: #c24a44;
}
.v10 {
    width: 156px;
    letter-spacing: .1px;
    color: #a08555;
}
.v20 {
    width: 156px;
    letter-spacing: .2px;
    color: #6a82cf;
}
.vv {
    width: 251px;
    color: #555;
}
.chips {
    width: 403px;
}
.axis {
    display: flex;
    align-items: center;
    height: 55px;
    padding-left: 7px;
    border-right: 2px solid #ebebeb;
    border-bottom: 2px solid #ebebeb;
    border-left: 2px solid #ebebeb;
    font-size: 39px;
    color: #999;
}
.axis span:nth-child(1) {
    width: 141px;
    letter-spacing: -1px;
}
.axis span:nth-child(2) {
    width: 140px;
}
.cost {
    height: 336px;
    padding: 4px 10px 0 2px;
    border-bottom: 2px solid #ebebeb;
    font-size: 34.7px;
    color: #555;
}
.cost p {
    display: flex;
    justify-content: space-between;
    align-items: center;
    height: 50px;
    margin: 0;
}
.cost p span {
    margin-top: -2px;
}
.cost b {
    font-size: 38px;
    letter-spacing: -1px;
    color: #303030;
}
.cost b.wide {
    letter-spacing: 0;
}
.cost b.tight {
    letter-spacing: -2.2px;
}
.toggle {
    display: flex;
    height: 53px;
    margin: 3px 0 3px -2px;
    padding: 4px;
    border-radius: 27px;
    background: #f6f7fa;
    font-size: 34.5px;
    line-height: 44px;
    text-align: center;
    color: #999;
}
.toggle span {
    flex: 1;
}
.toggle .sel {
    border-radius: 23px;
    background: #fff;
    color: #111;
}
.cost .foot {
    margin-top: 21px;
    font-size: 38px;
    letter-spacing: .9px;
}
.cost .foot a {
    font-size: 34.7px;
    letter-spacing: 0;
    color: #4071c2;
}

/* Tool chips */
.tools {
    display: flex;
    align-items: center;
    gap: 22px;
    height: 143px;
    padding: 0 0 11px 42px;
}
.tool {
    display: flex;
    align-items: center;
    gap: 14px;
    width: 270px;
    height: 87px;
    padding: 0 0 3px 22px;
    border: 2px solid #e4e4e4;
    border-radius: 44px;
    background: #f7f7f7;
    font-size: 41.8px;
    color: #666;
}
.tool-line {
    width: 3px;
    height: 56px;
    background: #ddd;
}

.sectors {
    display: flex;
    height: 220px;
}
.sec-title {
    width: 176px;
    padding: 56px 0 0 41px;
    font-size: 46px;
    line-height: 55px;
    font-weight: 900;
    color: #151515;
}
.sec-title em {
    font-style: normal;
    color: #d94d4d;
}
.sec-list {
    display: flex;
    width: 1264px;
    overflow: hidden;
    border-radius: 14px 0 0 14px;
    background: #f7f7f7;
}
.sec {
    display: flex;
    flex-direction: column;
    align-items: center;
    flex: none;
    width: 359px;
    padding-top: 44px;
    background: linear-gradient(#d5d5d5, #d5d5d5) no-repeat right 68px / 2px 84px;
    font-size: 52.5px;
    line-height: 72px;
    white-space: nowrap;
}
.sec:first-child {
    width: 357px;
}
.sec b {
    font-size: 48px;
    line-height: 62px;
    letter-spacing: 1px;
    color: #4ca766;
}
.notice.video {
    height: 172px;
    padding-bottom: 34px;
    border-bottom: 28px solid #f3f4f8;
    color: #303030;
}

/* Bottom bar */
.bottom {
    display: flex;
    align-items: center;
    height: 177px;
    margin-top: 28px;
    border-top: 2px solid #d4d4d6;
    background: #f9fafc;
}
.index {
    width: 391px;
    padding: 0 0 4px 29px;
}
.idx-num {
    display: flex;
    align-items: center;
    gap: 14px;
    font-size: 56px;
    line-height: 66px;
    letter-spacing: -1.3px;
    color: #4ca766;
}
.idx-name {
    font-size: 40.5px;
    line-height: 62px;
    color: #606060;
    white-space: nowrap;
}
.idx-name b {
    margin-left: 3px;
    font-size: 38px;
    letter-spacing: .8px;
    color: #4ca766;
}
.act {
    display: flex;
    align-items: center;
    justify-content: center;
    width: 263px;
    height: 97px;
    padding-bottom: 6px;
    border-left: 2px solid #ddd;
    font-size: 58px;
    font-weight: 500;
}
.act.last {
    flex-direction: column;
    gap: 6px;
    width: 260px;
    padding-bottom: 0;
    font-size: 36.5px;
    font-weight: 400;
    line-height: 60px;
    color: #606060;
}
.home-bar {
    width: 532px;
    height: 13px;
    margin: 17px 0 0 450px;
    border-radius: 7px;
    background: #696969;
}
```
